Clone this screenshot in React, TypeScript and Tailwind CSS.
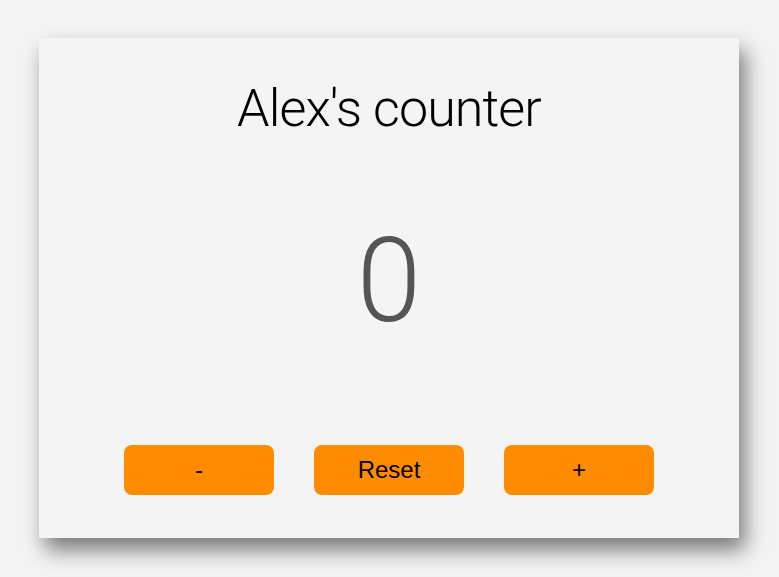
import { useState } from "react";

export default function App() {
  const [count, setCount] = useState(0);

  return (
    <div className="h-screen w-full bg-[#f4f4f4] pl-[39px] pt-[38px]">
      <div className="w-[700px] h-[500px] bg-[#f4f4f4] flex flex-col items-center pt-[45px] pb-[43px] shadow-[6px_12px_20px_rgba(0,0,0,0.5)]">
        <h1 className="font-['Roboto',sans-serif] font-light text-[52px] leading-none tracking-[-0.9px] text-black">
          Alex's counter
        </h1>
        <p className="mt-[88px] font-['Roboto',sans-serif] font-light text-[116px] leading-none text-[#555555]">
          {count}
        </p>
        <div className="mt-auto flex gap-10">
          <button
            className="w-[150px] h-[50px] rounded-lg bg-[#ff8c00] text-black text-[24px] font-['Liberation_Sans',Arial,sans-serif]"
            onClick={() => setCount(count - 1)}
          >
            -
          </button>
          <button
            className="w-[150px] h-[50px] rounded-lg bg-[#ff8c00] text-black text-[24px] font-['Liberation_Sans',Arial,sans-serif]"
            onClick={() => setCount(0)}
          >
            Reset
          </button>
          <button
            className="w-[150px] h-[50px] rounded-lg bg-[#ff8c00] text-black text-[24px] font-['Liberation_Sans',Arial,sans-serif]"
            onClick={() => setCount(count + 1)}
          >
            +
          </button>
        </div>
      </div>
    </div>
  );
}
